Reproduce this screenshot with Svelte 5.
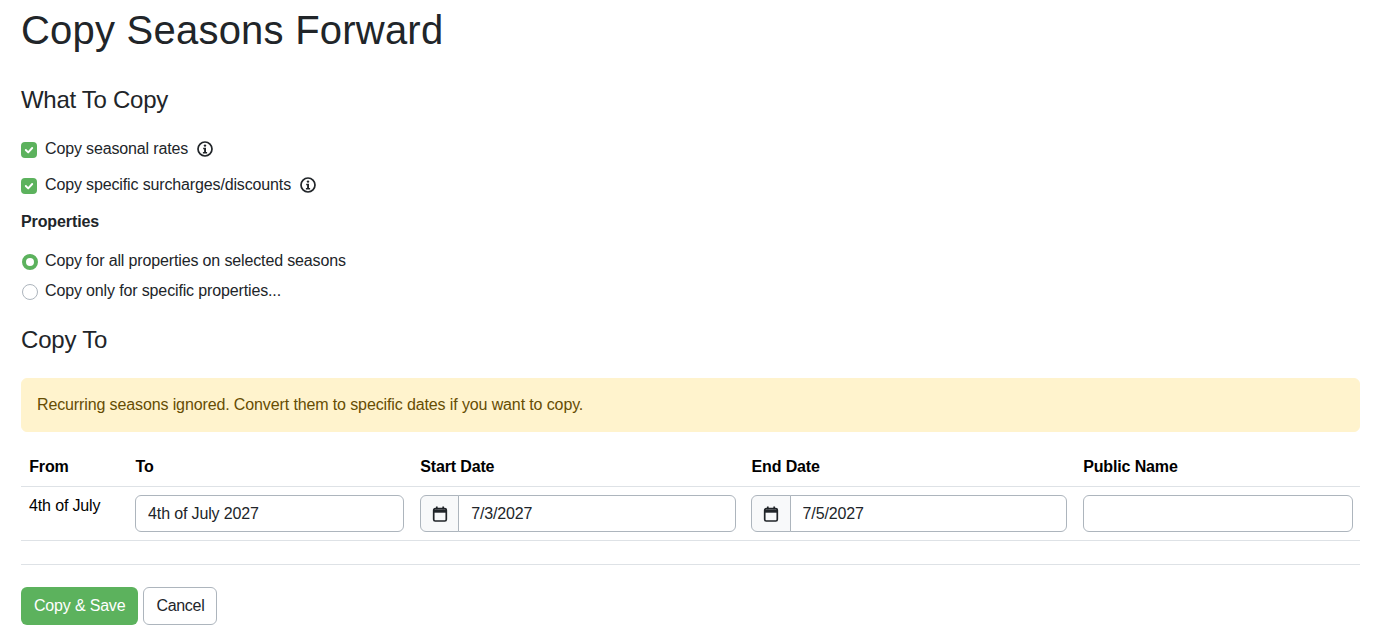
<script>
  const rows = [{ from: "4th of July", to: "4th of July 2027", start: "7/3/2027", end: "7/5/2027", name: "" }];
</script>

{#snippet info()}
  <svg class="info" viewBox="0 0 16 16" width="16" height="16" aria-hidden="true">
    <circle cx="8" cy="8" r="7" fill="none" stroke="#212529" stroke-width="1.7" />
    <circle cx="8" cy="4.6" r="1.2" fill="#212529" />
    <path d="M6.2 6.8h2.8v4.2h1.1v1.4H5.9V11h1.2V8.2h-.9z" fill="#212529" />
  </svg>
{/snippet}

{#snippet calendar()}
  <svg viewBox="0 0 16 16" width="16" height="16" aria-hidden="true">
    <rect x="1.7" y="2.7" width="12.6" height="12.3" rx="1.5" fill="none" stroke="#212529" stroke-width="1.7" />
    <path d="M1.7 3.5h12.6v3.2H1.7z" fill="#212529" />
    <path d="M4.8 0.4v2.8M11.2 0.4v2.8" stroke="#212529" stroke-width="1.7" />
  </svg>
{/snippet}

<div class="page">
  <h1>Copy Seasons Forward</h1>

  <h4 class="what">What To Copy</h4>

  <label class="check first">
    <span class="box">
      <svg viewBox="0 0 20 20" width="16" height="16" aria-hidden="true">
        <path d="M6 10l3 3 5-5.5" fill="none" stroke="#fff" stroke-width="2.4" stroke-linecap="round" stroke-linejoin="round" />
      </svg>
    </span>
    Copy seasonal rates
    {@render info()}
  </label>
  <label class="check second">
    <span class="box">
      <svg viewBox="0 0 20 20" width="16" height="16" aria-hidden="true">
        <path d="M6 10l3 3 5-5.5" fill="none" stroke="#fff" stroke-width="2.4" stroke-linecap="round" stroke-linejoin="round" />
      </svg>
    </span>
    Copy specific surcharges/discounts
    {@render info()}
  </label>

  <div class="label">Properties</div>

  <label class="check radio-one"><span class="radio on"></span>Copy for all properties on selected seasons</label>
  <label class="check radio-two"><span class="radio"></span>Copy only for specific properties...</label>

  <h4 class="to">Copy To</h4>

  <div class="alert">Recurring seasons ignored. Convert them to specific dates if you want to copy.</div>

  <table>
    <colgroup>
      <col style="width: 106.4px" />
      <col style="width: 284.6px" />
      <col style="width: 331.4px" />
      <col style="width: 331.6px" />
      <col />
    </colgroup>
    <thead>
      <tr>
        <th>From</th>
        <th>To</th>
        <th>Start Date</th>
        <th>End Date</th>
        <th>Public Name</th>
      </tr>
    </thead>
    <tbody>
      {#each rows as row}
        <tr>
          <td class="from">{row.from}</td>
          <td><input class="field" value={row.to} /></td>
          <td class="start">
            <div class="group">
              <span class="addon">{@render calendar()}</span>
              <input class="field" value={row.start} />
            </div>
          </td>
          <td>
            <div class="group">
              <span class="addon">{@render calendar()}</span>
              <input class="field" value={row.end} />
            </div>
          </td>
          <td class="last"><input class="field" value={row.name} /></td>
        </tr>
      {/each}
    </tbody>
  </table>

  <hr />

  <div class="actions">
    <button class="btn save">Copy &amp; Save</button>
    <button class="btn cancel">Cancel</button>
  </div>
</div>

<style>
  :global(body) {
    margin: 0;
    background: #fff;
    color: #212529;
    font-family: "Liberation Sans", Arial, sans-serif;
    font-size: 16px;
    line-height: 1.5;
    letter-spacing: -0.14px;
  }

  .page {
    padding: 6px 14px 0 21px;
  }

  h1 {
    margin: 0;
    font-size: 40px;
    font-weight: 400;
    line-height: 48px;
    letter-spacing: 0.22px;
  }

  h4 {
    margin: 0;
    font-size: 24px;
    font-weight: 400;
    line-height: 29px;
    letter-spacing: -0.2px;
  }

  .what {
    margin-top: 31px;
    letter-spacing: -0.28px;
  }

  .to {
    margin-top: 22px;
  }

  .check {
    display: flex;
    align-items: center;
    height: 24px;
  }

  .first {
    margin-top: 23px;
  }

  .second {
    margin-top: 12px;
  }

  .radio-one {
    margin-top: 15px;
  }

  .radio-two {
    margin-top: 6px;
  }

  .box {
    flex: none;
    width: 16px;
    height: 16px;
    margin: 1px 8px 0 0;
    border-radius: 4px;
    background: #5cb25d;
    display: flex;
  }

  .radio {
    flex: none;
    box-sizing: border-box;
    width: 16px;
    height: 16px;
    margin: 2px 7px 0 1px;
    border: 1px solid #adb5bd;
    border-radius: 50%;
    background: #fff;
  }

  .radio.on {
    border: 4.5px solid #5cb25d;
  }

  .info {
    margin-left: 9px;
  }

  .label {
    margin-top: 13px;
    font-weight: 700;
    letter-spacing: -0.1px;
  }

  .alert {
    margin-top: 24px;
    box-sizing: border-box;
    height: 54px;
    padding: 14px 15px;
    border: 1px solid #fff3cd;
    border-radius: 6px;
    background: #fff3cd;
    color: #664d03;
    letter-spacing: -0.12px;
  }

  table {
    width: 100%;
    margin-top: 16px;
    border-collapse: collapse;
    table-layout: fixed;
    color: #000;
  }

  th {
    padding: 7px 8px 7px 8.2px;
    box-sizing: border-box;
    text-align: left;
    font-weight: 700;
    border-bottom: 1px solid #dee2e6;
  }

  td {
    padding: 8px;
    box-sizing: border-box;
    vertical-align: top;
    border-bottom: 1px solid #dee2e6;
  }

  td.from {
    padding-top: 7px;
  }

  td.start,
  td.last {
    padding-right: 7.5px;
  }

  .field {
    display: block;
    box-sizing: border-box;
    width: 100%;
    min-width: 0;
    height: 37px;
    margin: 0;
    padding: 6px 12px 6px 11.7px;
    border: 1px solid #adb5bd;
    border-radius: 6px;
    background: #fff;
    color: #212529;
    font: inherit;
    letter-spacing: -0.14px;
  }

  .group {
    display: flex;
  }

  .addon {
    flex: none;
    box-sizing: border-box;
    width: 39.5px;
    height: 37px;
    display: flex;
    align-items: center;
    justify-content: center;
    border: 1px solid #adb5bd;
    border-radius: 6px 0 0 6px;
    background: #f8f9fa;
  }

  .group .field {
    flex: 1;
    margin-left: -1px;
    border-radius: 0 6px 6px 0;
  }

  hr {
    margin: 23px 0 22px;
    border: 0;
    border-top: 1px solid #dee2e6;
  }

  .actions {
    display: flex;
    gap: 5px;
  }

  .btn {
    box-sizing: border-box;
    height: 38px;
    padding: 6px 12px;
    border: 1px solid transparent;
    border-radius: 6px;
    font: inherit;
    letter-spacing: -0.18px;
  }

  .save {
    background: #5cb25d;
    color: #fff;
  }

  .cancel {
    background: #fff;
    border-color: #adb5bd;
    color: #212529;
    letter-spacing: -0.3px;
  }
</style>
